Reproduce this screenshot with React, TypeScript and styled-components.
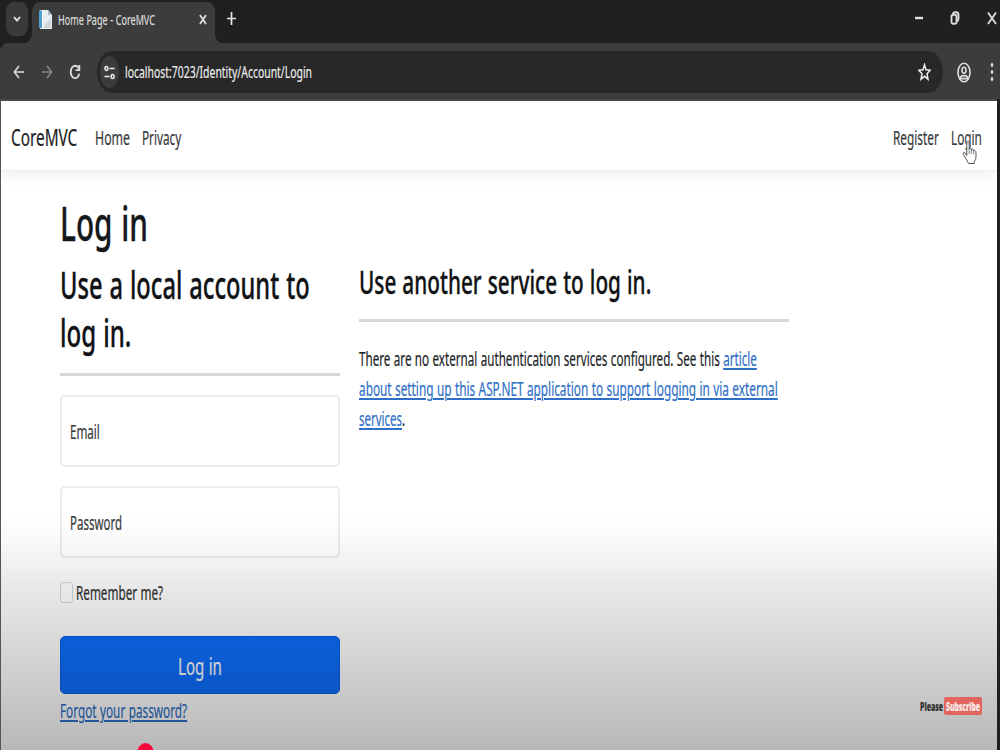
import React, { useLayoutEffect, useRef, useState } from 'react';
import styled, { createGlobalStyle } from 'styled-components';

const GlobalStyle = createGlobalStyle`
  * { box-sizing: border-box; }
  html, body { margin: 0; padding: 0; overflow: hidden; }
  body { font-family: "Noto Sans", "Open Sans", sans-serif; color: #212529; }
`;

/* Text condensed horizontally to an exact measure. */
const FitBox = styled.span<{ $width: number; $size: number; $line: number }>`
  display: block;
  flex: none;
  width: ${(p) => p.$width}px;
  height: ${(p) => p.$line}px;
  font-size: ${(p) => p.$size}px;
  line-height: ${(p) => p.$line}px;
  word-spacing: 0.03em;
  -webkit-text-stroke: ${(p) => (p.$size > 30 ? 0.35 : 0.2)}px currentColor;
  white-space: nowrap;
`;
const FitInner = styled.span`
  display: inline-block;
  transform-origin: 0 50%;
  vertical-align: top;
`;

type FitProps = { width: number; size?: number; line?: number; children: React.ReactNode };

function Fit({ width, size = 19, line = 30, children }: FitProps) {
  const ref = useRef<HTMLSpanElement>(null);
  const [scale, setScale] = useState(0.7);
  useLayoutEffect(() => {
    const measure = () => {
      if (ref.current) setScale(width / ref.current.offsetWidth);
    };
    measure();
    document.fonts?.ready.then(measure);
  }, [width]);
  return (
    <FitBox $width={width} $size={size} $line={line}>
      <FitInner ref={ref} style={{ transform: `scaleX(${scale})` }}>{children}</FitInner>
    </FitBox>
  );
}

const Window = styled.div`
  position: relative;
  width: 1000px;
  height: 750px;
  overflow: hidden;
  display: flex;
  flex-direction: column;
  background: #202020;
`;
const TabStrip = styled.div`
  display: flex;
  height: 43px;
  padding: 2px 3px 0 6px;
  background: #202020;
  color: #e4e4e4;
`;
const TabSearch = styled.div`
  display: flex;
  align-items: center;
  justify-content: center;
  width: 22px;
  height: 34px;
  border-radius: 7px / 10px;
  background: #3a3a3a;
`;
const Tab = styled.div`
  position: relative;
  display: flex;
  align-items: center;
  width: 183px;
  height: 41px;
  margin-left: 4px;
  padding: 0 8px 7px 7px;
  border-radius: 7px 7px 0 0 / 10px 10px 0 0;
  background: #3c3c3c;
  color: #dcdcdc;
  &::before, &::after {
    content: '';
    position: absolute;
    bottom: 0;
    width: 7px;
    height: 10px;
  }
  &::before { left: -7px; background: radial-gradient(7px 10px at 0 0, #202020 97%, #3c3c3c 100%); }
  &::after { right: -7px; background: radial-gradient(7px 10px at 100% 0, #202020 97%, #3c3c3c 100%); }
`;
const TabTitle = styled.div`
  flex: 1;
  padding: 1px 0 0 6px;
`;
const NewTab = styled.div`
  display: flex;
  margin: 10px 0 0 12px;
  height: 13px;
`;
const WindowButtons = styled.div`
  display: flex;
  align-items: flex-start;
  margin-left: auto;
  padding-top: 7px;
`;
const Toolbar = styled.div`
  display: flex;
  align-items: center;
  height: 56px;
  padding: 2px 4px 0 13px;
  border-radius: 7px 0 0 0 / 9px 0 0 0;
  background: #3c3c3c;
  color: #dedede;
`;
const ToolbarIcon = styled.div<{ $gap: number; $dim?: boolean }>`
  display: flex;
  margin-left: ${(p) => p.$gap}px;
  color: ${(p) => (p.$dim ? '#858585' : '#dedede')};
`;
const AddressBar = styled.div`
  display: flex;
  align-items: center;
  width: 846px;
  height: 42px;
  margin-left: 16px;
  padding: 0 12px 0 3px;
  border-radius: 15px / 21px;
  background: #282828;
  color: #ececec;
`;
const SiteInfo = styled.div`
  display: flex;
  align-items: center;
  justify-content: center;
  width: 19px;
  height: 32px;
  border-radius: 50%;
  background: #3c3c3c;
  margin-right: 6px;
`;
const Spacer = styled.div`
  flex: 1;
`;
const Viewport = styled.div`
  flex: 1;
  margin: 0 3px 0 0;
  border-top: 2px solid #4b4846;
  border-left: 1px solid #555;
  background: #fff;
`;
const Navbar = styled.nav`
  display: flex;
  align-items: center;
  height: 70px;
  padding: 4px 15px 0 10px;
  border-bottom: 1px solid #ededed;
  box-shadow: 0 6px 12px rgba(0, 0, 0, 0.05);
  color: #303234;
`;
const NavItem = styled.div<{ $gap: number; $brand?: boolean }>`
  margin-left: ${(p) => p.$gap}px;
  padding-bottom: ${(p) => (p.$brand ? 2 : 0)}px;
  color: ${(p) => (p.$brand ? '#202224' : '#37393b')};
`;
const Content = styled.main`
  padding: 23px 0 0 59px;
`;
const Heading = styled.h1`
  margin: 0 0 8px;
  font-weight: 500;
  color: #15181b;
`;
const SubHeading = styled.h2`
  margin: 0;
  font-weight: 500;
  color: #101316;
`;
const Columns = styled.div`
  display: flex;
  gap: 19px;
`;
const LocalLogin = styled.section`
  width: 280px;
`;
const ExternalLogin = styled.section`
  width: 430px;
  padding-top: 2px;
`;
const Rule = styled.hr<{ $top: number; $bottom: number }>`
  height: 3px;
  margin: ${(p) => p.$top}px 0 ${(p) => p.$bottom}px;
  border: 0;
  background: #d8d8d8;
`;
const Field = styled.label`
  display: flex;
  align-items: center;
  height: 72px;
  margin-bottom: 19px;
  padding: 2px 8px 0;
  border: 2px solid #ebecec;
  border-radius: 5px;
  color: #37393b;
`;
const Remember = styled.label`
  display: flex;
  align-items: center;
  gap: 3px;
  margin-top: 20px;
  color: #303030;
`;
const Checkbox = styled.span`
  width: 13px;
  height: 21px;
  margin-bottom: 1px;
  border: 1.5px solid #d8d8d8;
  border-radius: 3px / 4px;
  background: #fff;
`;
const SubmitButton = styled.button`
  display: flex;
  align-items: center;
  justify-content: center;
  width: 280px;
  height: 58px;
  margin: 28px 0 2px;
  padding: 2px 0 0;
  border: 1px solid #0b5ddb;
  border-radius: 5px;
  background: #0d6efd;
  color: #fff;
  font: inherit;
`;
const Link = styled.a`
  color: #2f70c6;
  text-decoration: underline;
  text-decoration-thickness: 1.5px;
  text-underline-offset: 2px;
  text-decoration-skip-ink: auto;
`;
const Shade = styled.div`
  position: absolute;
  inset: 500px 3px 0 1px;
  pointer-events: none;
  background: linear-gradient(
    to bottom,
    rgba(0, 0, 0, 0) 6%,
    rgba(0, 0, 0, 0.015) 14%,
    rgba(0, 0, 0, 0.05) 24%,
    rgba(0, 0, 0, 0.095) 36%,
    rgba(0, 0, 0, 0.15) 56%,
    rgba(0, 0, 0, 0.215) 78%,
    rgba(0, 0, 0, 0.28) 100%
  );
`;
const Playhead = styled.div`
  position: absolute;
  left: 137px;
  top: 743px;
  width: 17px;
  height: 22px;
  border-radius: 50%;
  background: #f8083a;
`;
const Watermark = styled.div`
  position: absolute;
  left: 920px;
  top: 697px;
  display: flex;
  align-items: center;
  gap: 1px;
  font-family: "Open Sans", sans-serif;
  font-weight: 800;
  color: #333;
`;
const SubscribeBadge = styled.div`
  width: 38px;
  height: 18px;
  padding: 0 2px;
  border-radius: 2px;
  background: #e2665f;
  color: #fbe9e7;
`;
const Pointer = styled.svg`
  position: absolute;
  left: 962px;
  top: 140px;
`;

type IconProps = { w: number; h: number; box: string; stroke?: number; children: React.ReactNode };
const Icon = ({ w, h, box, stroke = 1.6, children }: IconProps) => (
  <svg width={w} height={h} viewBox={box} preserveAspectRatio="none" fill="none" stroke="currentColor" strokeWidth={stroke}>
    {children}
  </svg>
);

export default function App() {
  return (
    <>
      <GlobalStyle />
      <Window>
        <TabStrip>
          <TabSearch>
            <Icon w={8} h={8} box="0 0 8 8" stroke={1.8}><path d="M1 2l3 3.6L7 2" /></Icon>
          </TabSearch>
          <Tab>
            <svg width="13" height="21" viewBox="0 0 13 21">
              <path d="M1 1h8l4 5v14H1z" fill="#e8eef2" />
              <path d="M9 1v5h4z" fill="#aebdc6" />
              <path d="M0 1.5h3v17.5H0z" fill="#4f9fcf" />
              <path d="M3 1.5h1v18H3z" fill="#fff" />
              <path d="M6 15l6-5v9H5z" fill="#cfd6da" />
            </svg>
            <TabTitle><Fit width={97} size={14} line={22}>Home Page - CoreMVC</Fit></TabTitle>
            <Icon w={8} h={11} box="0 0 8 11" stroke={1.8}><path d="M1 1l6 9M7 1L1 10" /></Icon>
          </Tab>
          <NewTab><Icon w={9} h={13} box="0 0 9 13" stroke={1.7}><path d="M4.5 0v13M0 6.5h9" /></Icon></NewTab>
          <WindowButtons>
            <Icon w={9} h={18} box="0 0 9 18" stroke={2.4}><path d="M0 9h8" /></Icon>
            <ToolbarIcon $gap={26}>
              <Icon w={10} h={18} box="0 0 10 18" stroke={1.9}>
                <rect x="1.5" y="5.8" width="5" height="9" rx="1.8" />
                <path d="M3 5Q3.2 3.2 5 3.2H6Q8.5 3.2 8.5 6V9.5Q8.5 11.5 7 12.3" />
              </Icon>
            </ToolbarIcon>
            <ToolbarIcon $gap={27}>
              <Icon w={10} h={18} box="0 0 10 18" stroke={1.8}><path d="M1 3.5l8 11.5M9 3.5L1 15" /></Icon>
            </ToolbarIcon>
          </WindowButtons>
        </TabStrip>

        <Toolbar>
          <ToolbarIcon $gap={0}>
            <Icon w={12} h={14} box="0 0 12 14"><path d="M11 7H1.5M6 1L1.3 7L6 13" /></Icon>
          </ToolbarIcon>
          <ToolbarIcon $gap={16} $dim>
            <Icon w={12} h={14} box="0 0 12 14"><path d="M1 7h9.5M6 1l4.7 6L6 13" /></Icon>
          </ToolbarIcon>
          <ToolbarIcon $gap={16}>
            <Icon w={12} h={16} box="0 0 12 16" stroke={1.8}>
              <path d="M9.6 4.2A4.4 6.2 0 1 0 10.3 9.8" />
              <path d="M10.3 1v5.2H6.5" />
            </Icon>
          </ToolbarIcon>
          <AddressBar>
            <SiteInfo>
              <Icon w={11} h={15} box="0 0 11 15" stroke={1.6}>
                <ellipse cx="2.4" cy="3.5" rx="1.4" ry="2" />
                <path d="M5.5 3.5H10.5M.5 11.5h5" />
                <ellipse cx="8.6" cy="11.5" rx="1.4" ry="2" />
              </Icon>
            </SiteInfo>
            <Fit width={187} size={17} line={28}>localhost:7023/Identity/Account/Login</Fit>
            <Spacer />
            <Icon w={13} h={18} box="0 0 13 18" stroke={1.5}>
              <path d="M6.5 1.6L8 6.7l4.2.5L9 10.7l1 5.5-3.5-2.9L3 16.2l1-5.5L.8 7.2 5 6.7z" />
            </Icon>
          </AddressBar>
          <ToolbarIcon $gap={14}>
            <Icon w={14} h={21} box="0 0 14 21" stroke={1.6}>
              <ellipse cx="7" cy="10.5" rx="6" ry="9.3" />
              <ellipse cx="7" cy="8.3" rx="2" ry="3" />
              <path d="M3 16.6Q3.3 13.6 7 13.6T11 16.6z" />
            </Icon>
          </ToolbarIcon>
          <Spacer />
          <svg width="8" height="18" viewBox="0 0 8 18" fill="#dedede">
            <ellipse cx="4" cy="2" rx="1.3" ry="1.9" />
            <ellipse cx="4" cy="9" rx="1.3" ry="1.9" />
            <ellipse cx="4" cy="16" rx="1.3" ry="1.9" />
          </svg>
        </Toolbar>

        <Viewport>
          <Navbar>
            <NavItem $gap={0} $brand><Fit width={66} size={23}>CoreMVC</Fit></NavItem>
            <NavItem $gap={18}><Fit width={35}>Home</Fit></NavItem>
            <NavItem $gap={12}><Fit width={39}>Privacy</Fit></NavItem>
            <Spacer />
            <NavItem $gap={0}><Fit width={46}>Register</Fit></NavItem>
            <NavItem $gap={12}><Fit width={31}>Login</Fit></NavItem>
          </Navbar>
          <Content>
            <Heading><Fit width={88} size={48} line={58}>Log in</Fit></Heading>
            <Columns>
              <LocalLogin>
                <SubHeading>
                  <Fit width={250} size={38} line={48}>Use a local account to</Fit>
                  <Fit width={71} size={38} line={48}>log in.</Fit>
                </SubHeading>
                <Rule $top={17} $bottom={19} />
                <Field><Fit width={30}>Email</Fit></Field>
                <Field><Fit width={52}>Password</Fit></Field>
                <Remember>
                  <Checkbox />
                  <Fit width={87}>Remember me?</Fit>
                </Remember>
                <SubmitButton><Fit width={44} size={24} line={34}>Log in</Fit></SubmitButton>
                <Fit width={127}><Link>Forgot your password?</Link></Fit>
              </LocalLogin>
              <ExternalLogin>
                <SubHeading><Fit width={292} size={33} line={40}>Use another service to log in.</Fit></SubHeading>
                <Rule $top={17} $bottom={22} />
                <Fit width={398}>There are no external authentication services configured. See this <Link>article</Link></Fit>
                <Fit width={419}><Link>about setting up this ASP.NET application to support logging in via external</Link></Fit>
                <Fit width={46}><Link>services</Link>.</Fit>
              </ExternalLogin>
            </Columns>
          </Content>
        </Viewport>

        <Shade />
        <Pointer width="15" height="25" viewBox="0 0 15 25">
          <path
            d="M4.8 15.5V3Q4.9 1 6 1T7.2 3V9.5Q7.3 8 8.4 8.2T9.4 10Q9.7 8.6 10.8 9T11.7 11Q12 10 13 10.5T14 13V17Q14 20 12.3 21.5V23.5H6.5Q5.5 21 3.8 18.5L1.4 14.5Q.8 13 1.8 12.5T4.8 15.5"
            fill="#fff" stroke="#555" strokeWidth="1"
          />
          <path d="M7.2 10v4M9.4 10v4M11.7 11v3.5" stroke="#666" strokeWidth=".8" />
        </Pointer>
        <Watermark>
          <Fit width={23} size={13} line={18}>Please</Fit>
          <SubscribeBadge><Fit width={34} size={13} line={18}>Subscribe</Fit></SubscribeBadge>
        </Watermark>
        <Playhead />
      </Window>
    </>
  );
}
